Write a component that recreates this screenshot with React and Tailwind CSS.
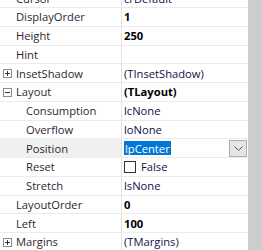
import React from 'react';

const rows = [
  { name: 'Cursor', value: 'crDefault' },
  { name: 'DisplayOrder', value: '1', bold: true },
  { name: 'Height', value: '250', bold: true },
  { name: 'Hint', value: '' },
  { name: 'InsetShadow', value: '(TInsetShadow)', toggle: 'plus' },
  { name: 'Layout', value: '(TLayout)', bold: true, toggle: 'minus' },
  { name: 'Consumption', value: 'lcNone', sub: true },
  { name: 'Overflow', value: 'loNone', sub: true },
  { name: 'Position', value: 'lpCenter', sub: true, selected: true },
  { name: 'Reset', value: 'False', sub: true, check: true },
  { name: 'Stretch', value: 'lsNone', sub: true },
  { name: 'LayoutOrder', value: '0', bold: true },
  { name: 'Left', value: '100', bold: true },
  { name: 'Margins', value: '(TMargins)', toggle: 'plus' },
];

const Toggle = ({ kind }) => (
  <svg width="9" height="9" viewBox="0 0 9 9" className="absolute left-[3px] top-[5px]">
    <rect x="0.5" y="0.5" width="8" height="8" fill="white" stroke="#8c8c8c" />
    <path d="M2 4.5h5" stroke="#333" />
    {kind === 'plus' && <path d="M4.5 2v5" stroke="#333" />}
  </svg>
);

export default function App() {
  return (
    <div className="flex w-[262px] h-[250px] overflow-hidden bg-white text-[11.2px] leading-none" style={{ fontFamily: '"Open Sans", sans-serif' }}>
      <div className="w-[248px] overflow-hidden">
        <div className="mt-[-10.75px]">
          {rows.map((r) => (
            <div key={r.name} className="flex h-[18.75px] border-b border-[#ebebeb]">
              <div className={`relative w-[122px] shrink-0 border-r border-[#e3e3e3] flex items-center text-[#2e1f33] ${r.sub ? 'pl-[26px]' : 'pl-[16px]'} ${r.selected ? 'bg-[#f0f0f0]' : ''}`}>
                {r.toggle && <Toggle kind={r.toggle} />}
                {r.name}
              </div>
              <div className={`flex-1 flex items-center pl-[2px] ${r.bold ? 'font-bold text-black' : 'text-[#10104a]'}`}>
                {r.selected ? (
                  <>
                    <span className="bg-[#0078d7] text-white h-[14px] flex items-center px-[1px]">{r.value}</span>
                    <div className="ml-auto mr-[1px] w-[18px] h-[17px] border border-[#adadad] bg-[#e5e5e5] flex items-center justify-center">
                      <svg width="9" height="5" viewBox="0 0 9 5">
                        <path d="M0.5 0.5l4 4 4-4" fill="none" stroke="#555" />
                      </svg>
                    </div>
                  </>
                ) : r.check ? (
                  <>
                    <span className="w-[12px] h-[12px] border border-[#333] bg-white mr-[5px]" />
                    {r.value}
                  </>
                ) : (
                  r.value
                )}
              </div>
            </div>
          ))}
        </div>
      </div>
      <div className="flex-1 bg-[#cdcdcd]" />
    </div>
  );
}
